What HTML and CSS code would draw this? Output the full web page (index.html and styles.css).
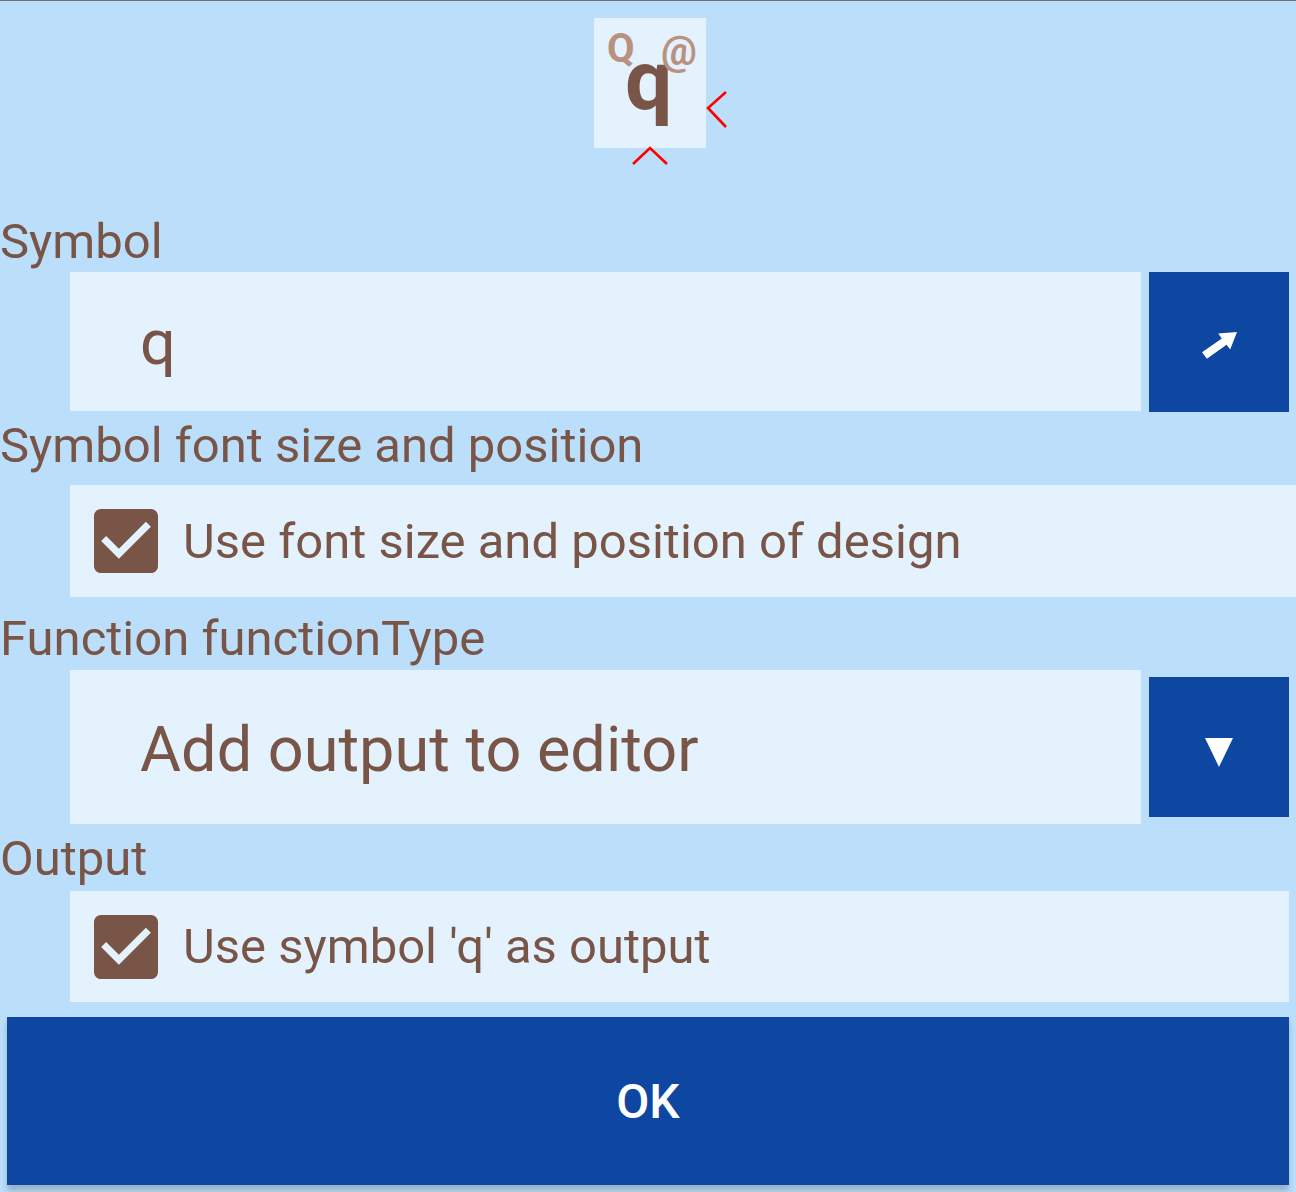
FILE: index.html
```html
<!DOCTYPE html>
<html>
<head>
<meta charset="utf-8">
<link rel="stylesheet" href="styles.css">
</head>
<body>
<div class="topline"></div>
<div class="preview">
  <span class="g-big">q</span>
  <span class="g-small g-cap">Q</span>
  <span class="g-small g-at">@</span>
  <svg class="mark mark-right" width="26" height="44" viewBox="0 0 26 44"><polyline points="22,4 4,20 22,39" /></svg>
  <svg class="mark mark-bottom" width="40" height="22" viewBox="0 0 40 22"><polyline points="3,19 20,3 37,19" /></svg>
</div>

<div class="label l-symbol">Symbol</div>
<div class="row row-symbol">
  <div class="field field-symbol">q</div>
  <div class="sqbtn">
    <svg width="140" height="140" viewBox="0 0 140 140"><polygon points="88,60 69.2,61.6 72.8,66.4 53.1,80.3 57.9,86.7 77.6,72.8 81.2,77.6" fill="#fff"/></svg>
  </div>
</div>

<div class="label l-size">Symbol font size and position</div>
<div class="checkrow check-size">
  <svg class="cbox" width="64" height="64" viewBox="3 3 18 18"><path d="M19 3H5c-1.11 0-2 .9-2 2v14c0 1.1.89 2 2 2h14c1.110 0 2-.9 2-2V5c0-1.1-.89-2-2-2zm-9 14l-5-5 1.41-1.41L10 14.17l7.59-7.590L19 8l-9 9z"/></svg>
  <span>Use font size and position of design</span>
</div>

<div class="label l-func">Function functionType</div>
<div class="row row-func">
  <div class="field field-func">Add output to editor</div>
  <div class="sqbtn">
    <svg width="140" height="140" viewBox="0 0 140 140"><polygon points="56,61 84,61 70,90" fill="#fff"/></svg>
  </div>
</div>

<div class="label l-output">Output</div>
<div class="checkrow check-output">
  <svg class="cbox" width="64" height="64" viewBox="3 3 18 18"><path d="M19 3H5c-1.11 0-2 .9-2 2v14c0 1.1.89 2 2 2h14c1.11 0 2-.9 2-2V5c0-1.1-.89-2-2-2zm-9 14l-5-5 1.41-1.41L10 14.17l7.59-7.59L19 8l-9 9z"/></svg>
  <span>Use symbol 'q' as output</span>
</div>

<button class="ok">OK</button>
</body>
</html>
```

FILE: styles.css
```css
html, body {
  margin: 0;
  padding: 0;
}
body {
  width: 1296px;
  height: 1192px;
  overflow: hidden;
  background: #bbdefb;
  font-family: Roboto, "Liberation Sans", sans-serif;
  color: #795548;
}
.topline {
  height: 1px;
  background: #66727c;
}
.preview {
  position: relative;
  margin: 17px 0 0 594px;
  width: 112px;
  height: 130px;
  background: #e3f2fd;
}
.g-big, .g-small {
  position: absolute;
  font-weight: 700;
  line-height: 1;
}
.g-big {
  font-size: 84px;
  left: 31px;
  top: 21px;
  color: #795548;
}
.g-small {
  font-size: 40px;
  color: #b8917f;
}
.g-cap {
  left: 13px;
  top: 11px;
}
.g-at {
  left: 67px;
  top: 14px;
}
.mark {
  position: absolute;
  overflow: visible;
}
.mark polyline {
  fill: none;
  stroke: #ff0000;
  stroke-width: 2.6;
}
.mark-right {
  left: 110px;
  top: 70px;
}
.mark-bottom {
  left: 36px;
  top: 127px;
}
.label {
  font-size: 49px;
  line-height: 56px;
  white-space: nowrap;
}
.l-symbol { margin-top: 66px; }
.l-size { margin-top: 6px; }
.l-func { margin-top: 14px; }
.l-output { margin-top: 7px; }

.row {
  display: flex;
  gap: 8px;
  margin: 0 7px 0 70px;
  align-items: center;
}
.row-symbol {
  margin-top: 2px;
  align-items: flex-start;
}
.row-func {
  margin-top: 3px;
}
.field {
  flex: 1;
  background: #e3f2fd;
  display: flex;
  align-items: center;
  padding-left: 70px;
  font-size: 63px;
  white-space: nowrap;
  box-sizing: border-box;
}
.field-symbol { height: 139px; padding-top: 2px; }
.field-func { height: 154px; padding-top: 5px; }
.sqbtn {
  width: 140px;
  height: 140px;
  flex: none;
  background: #0d47a1;
}
.sqbtn svg { display: block; }

.checkrow {
  display: flex;
  align-items: center;
  gap: 25px;
  margin-left: 70px;
  padding-left: 24px;
  background: #e3f2fd;
  font-size: 49px;
  white-space: nowrap;
}
.check-size {
  margin-top: 11px;
  height: 112px;
}
.check-output {
  margin-top: 4px;
  margin-right: 7px;
  height: 111px;
}
.cbox {
  display: block;
  flex: none;
  fill: #795548;
}
.ok {
  display: block;
  margin: 15px 7px 0 7px;
  width: 1282px;
  height: 168px;
  border: none;
  padding: 0;
  background: #0d47a1;
  color: #ffffff;
  font-family: Roboto, "Liberation Sans", sans-serif;
  font-weight: 500;
  font-size: 48px;
  box-shadow: 0 6px 6px rgba(0, 0, 0, 0.2);
}
```
